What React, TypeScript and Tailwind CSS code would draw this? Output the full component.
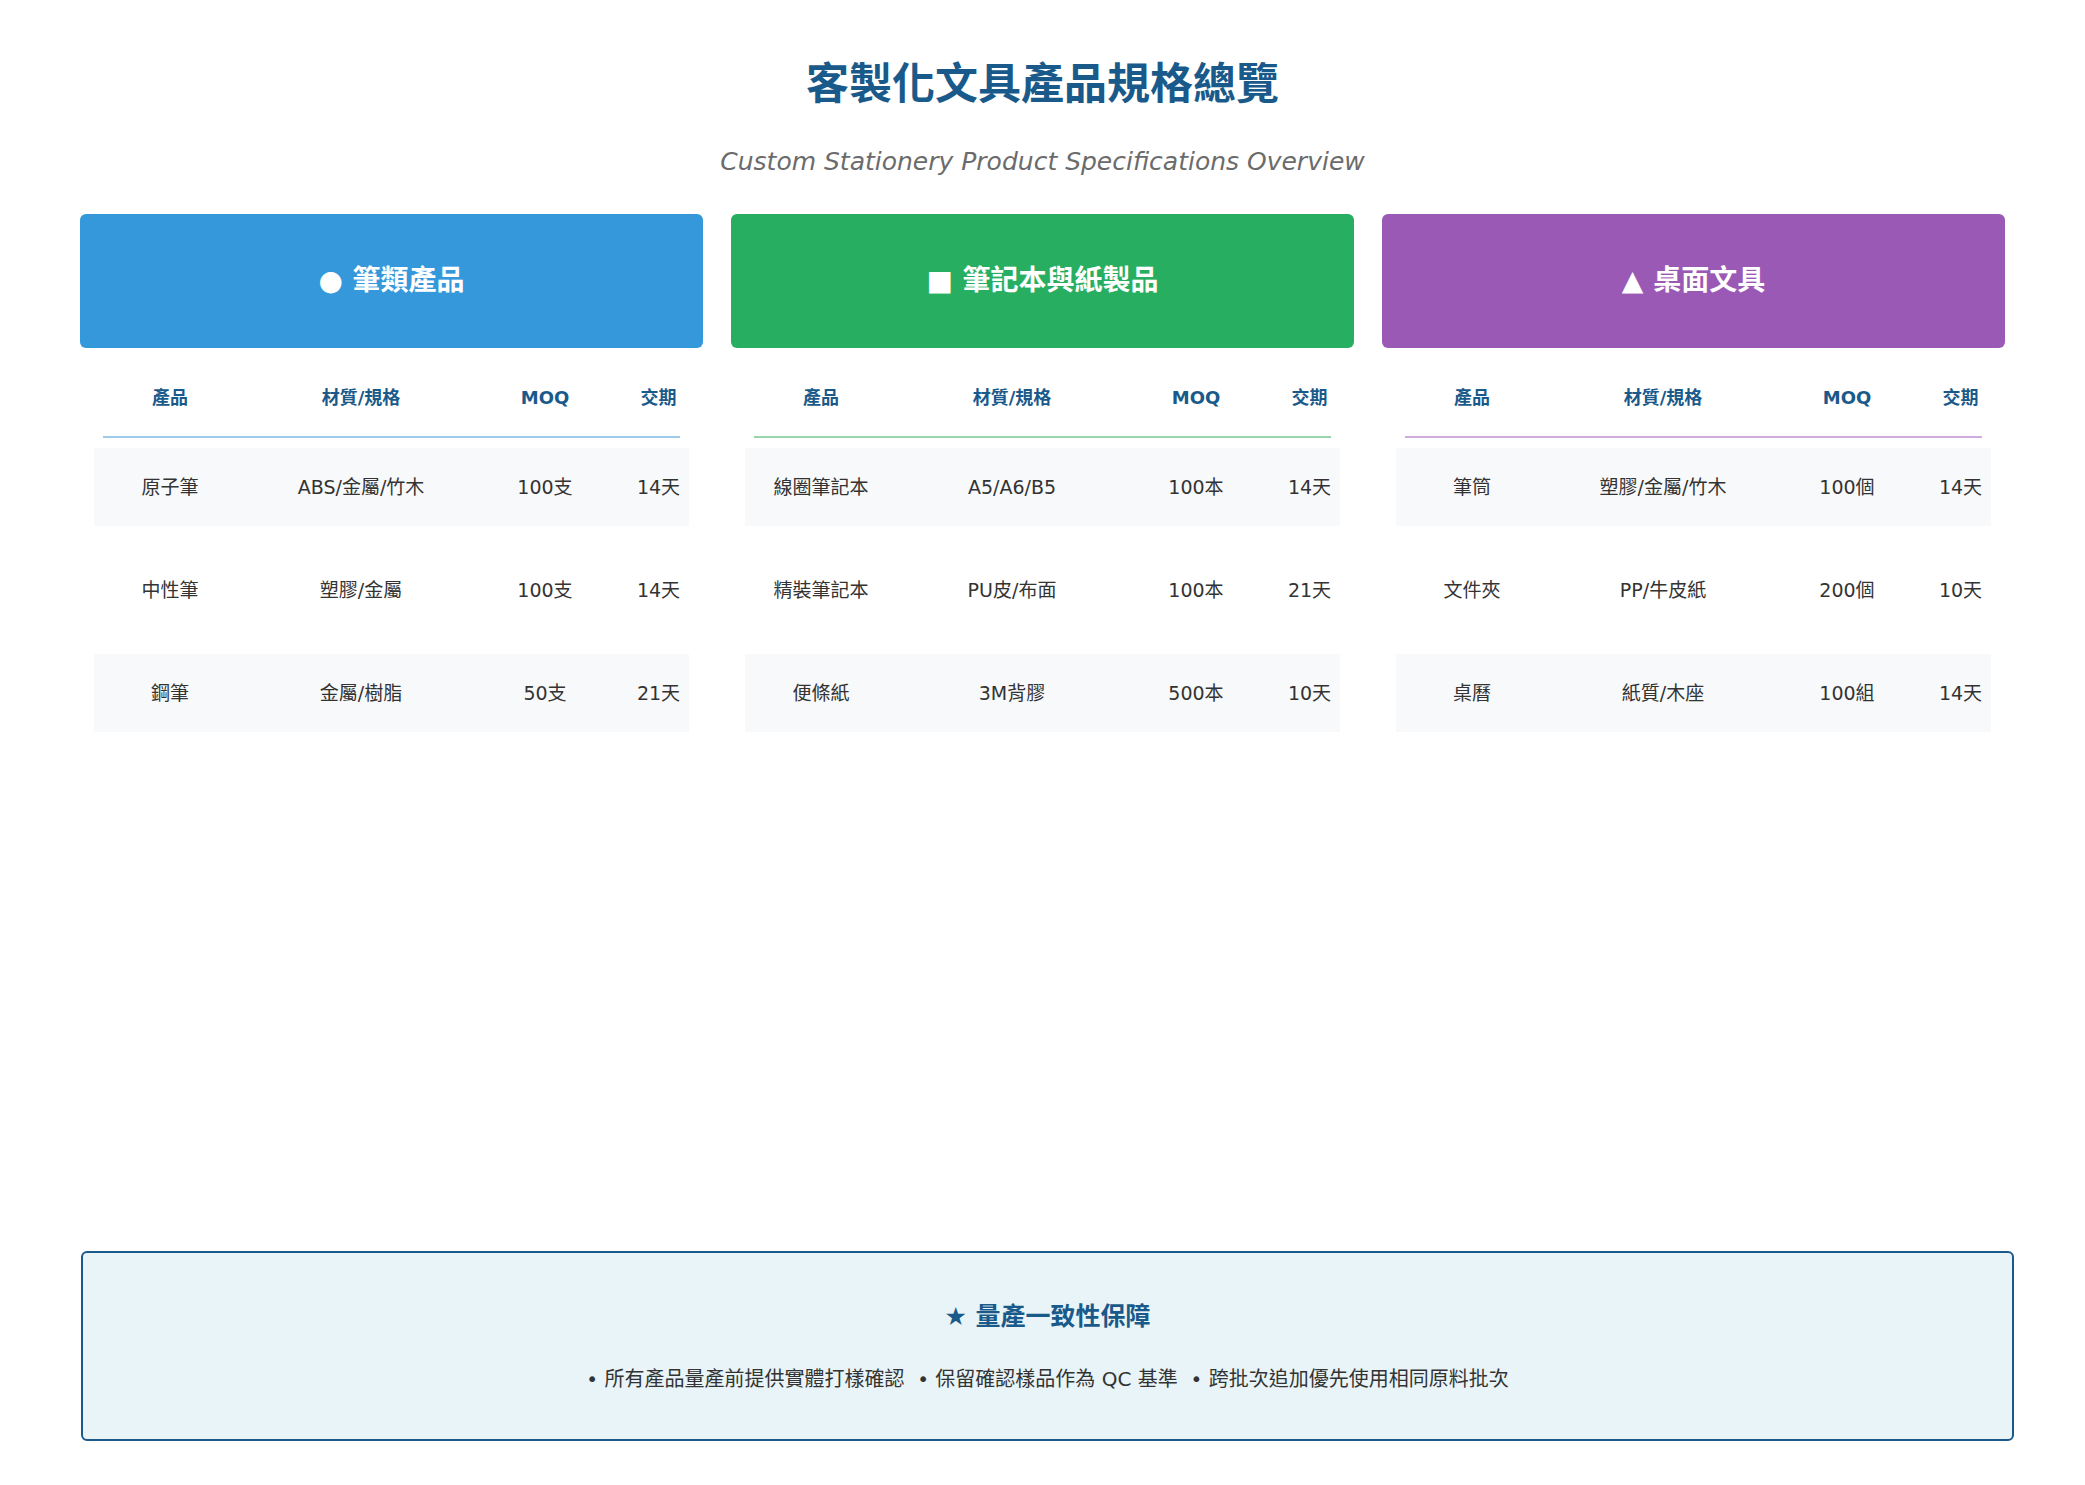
const font = { fontFamily: '"DejaVu Sans", "Noto Sans CJK TC", sans-serif' };

type Row = [string, string, string, string];

const sections: { title: string; mark: string; bg: string; line: string; rows: Row[] }[] = [
  {
    title: '筆類產品',
    mark: '●',
    bg: 'bg-[#3498db]',
    line: 'bg-[#9ecbec]',
    rows: [
      ['原子筆', 'ABS/金屬/竹木', '100支', '14天'],
      ['中性筆', '塑膠/金屬', '100支', '14天'],
      ['鋼筆', '金屬/樹脂', '50支', '21天'],
    ],
  },
  {
    title: '筆記本與紙製品',
    mark: '■',
    bg: 'bg-[#27ae60]',
    line: 'bg-[#98d5ad]',
    rows: [
      ['線圈筆記本', 'A5/A6/B5', '100本', '14天'],
      ['精裝筆記本', 'PU皮/布面', '100本', '21天'],
      ['便條紙', '3M背膠', '500本', '10天'],
    ],
  },
  {
    title: '桌面文具',
    mark: '▲',
    bg: 'bg-[#9b59b6]',
    line: 'bg-[#cfacdc]',
    rows: [
      ['筆筒', '塑膠/金屬/竹木', '100個', '14天'],
      ['文件夾', 'PP/牛皮紙', '200個', '10天'],
      ['桌曆', '紙質/木座', '100組', '14天'],
    ],
  },
];

const cols = 'grid grid-cols-[152px_230px_138px_89px]';

function Section({ s }: { s: (typeof sections)[number] }) {
  return (
    <div className="flex flex-col">
      <div className={`${s.bg} h-[134px] rounded-[6px] flex items-center justify-center text-white text-[28px] font-bold`}>
        {s.mark} {s.title}
      </div>
      <div className="px-[14px]">
        <div className={`${cols} mt-[36px] text-[18px] font-bold text-[#1a5a8a]`}>
          <div className="text-center">產品</div>
          <div className="text-center">材質/規格</div>
          <div className="text-center">MOQ</div>
          <div className="text-center">交期</div>
        </div>
        <div className={`mx-[9px] mt-[25px] h-[2px] ${s.line}`} />
        <div className="mt-[10px] flex flex-col gap-[25px]">
          {s.rows.map((r, i) => (
            <div
              key={i}
              className={`${cols} h-[78px] items-center text-[19px] text-[#333] ${i % 2 === 0 ? 'bg-[#f8f9fa]' : ''}`}
            >
              {r.map((c, j) => (
                <div key={j} className="text-center">
                  {c}
                </div>
              ))}
            </div>
          ))}
        </div>
      </div>
    </div>
  );
}

export default function App() {
  return (
    <div className="w-[2085px] h-[1485px] bg-white flex flex-col" style={font}>
      <h1 className="mt-[56px] text-center text-[43px] font-bold text-[#1a5a8a] leading-[56px]">
        客製化文具產品規格總覽
      </h1>
      <p className="mt-[34px] text-center text-[25px] italic text-[#6b6b6b] leading-[32px]">
        Custom Stationery Product Specifications Overview
      </p>
      <div className="mt-[36px] mx-[80px] grid grid-cols-3 gap-[28px]">
        {sections.map((s) => (
          <Section key={s.title} s={s} />
        ))}
      </div>
      <div className="mt-auto mb-[44px] ml-[81px] w-[1933px] h-[190px] border-2 border-[#1a5a8a] rounded-[6px] bg-[#e8f4f8] flex flex-col items-center justify-center">
        <div className="text-[25px] font-bold text-[#1a5a8a]">★ 量產一致性保障</div>
        <div className="mt-[28px] text-[20px] text-[#333]">
          • 所有產品量產前提供實體打樣確認 &nbsp;• 保留確認樣品作為 QC 基準 &nbsp;• 跨批次追加優先使用相同原料批次
        </div>
      </div>
    </div>
  );
}
